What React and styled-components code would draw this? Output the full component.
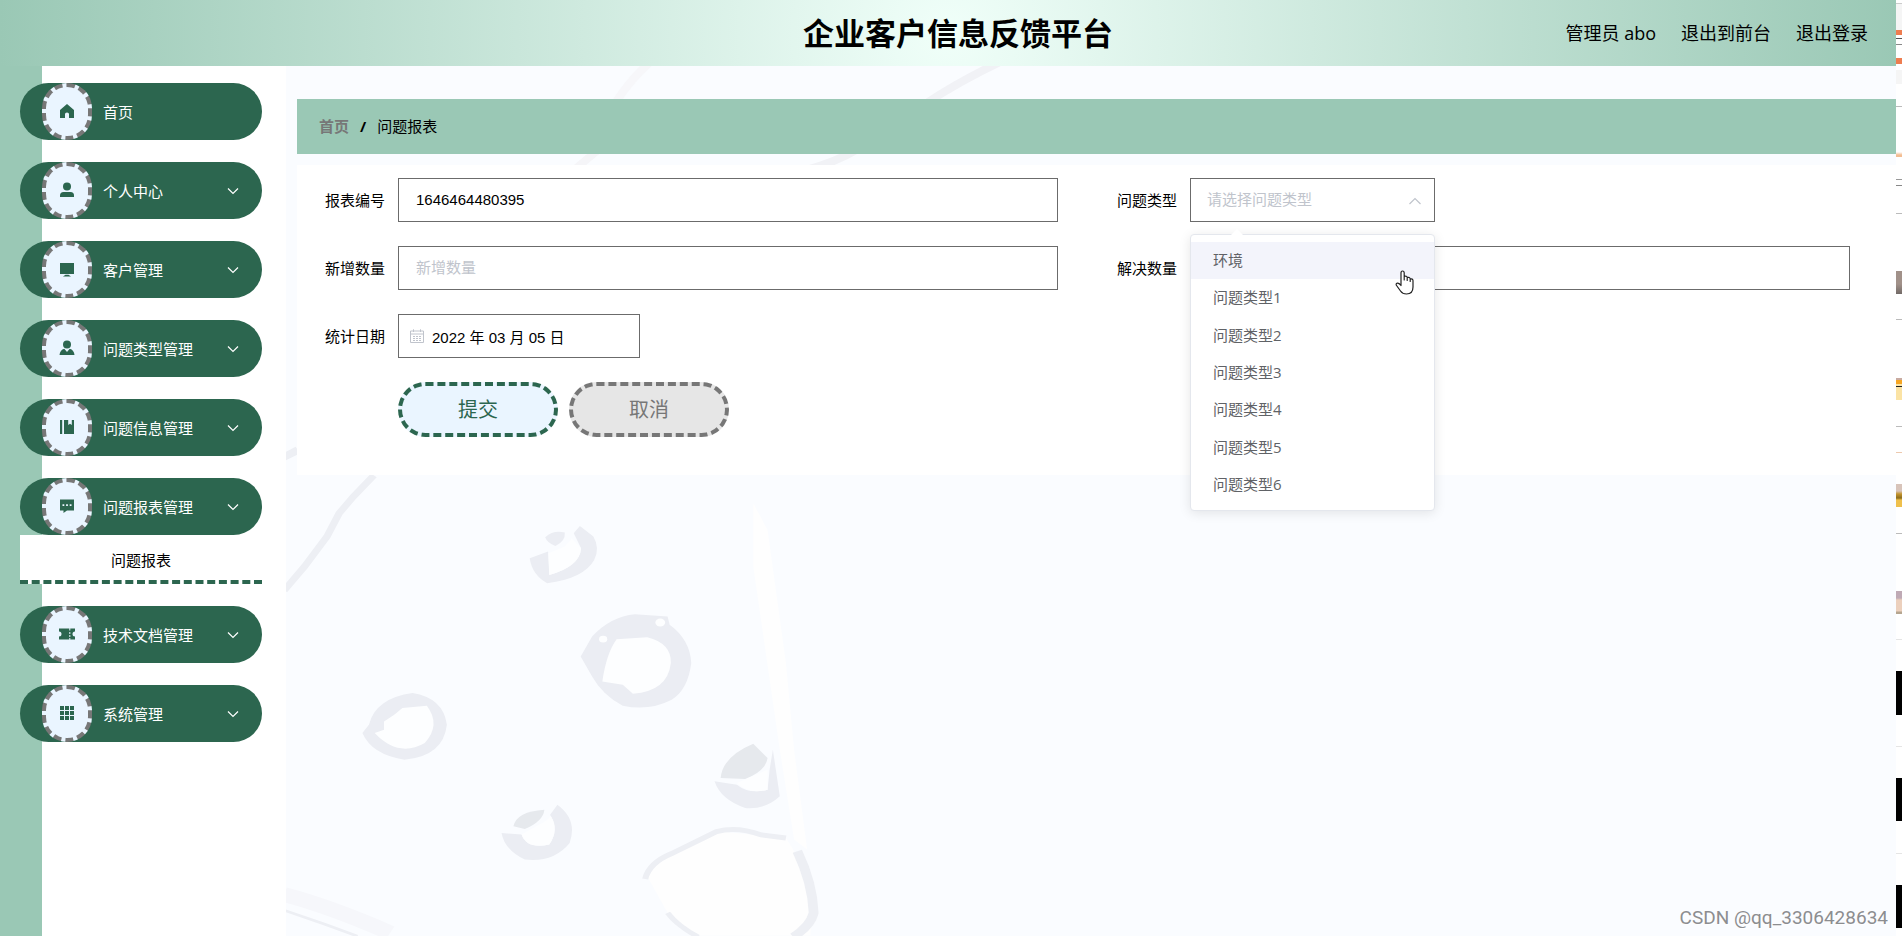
import React from "react";
import styled, { createGlobalStyle, css } from "styled-components";

const GlobalStyle = createGlobalStyle`
  * {
    box-sizing: border-box;
  }
  body {
    margin: 0;
    background: #fff;
    color: #000;
    font-family: "Open Sans", "Noto Sans CJK SC", sans-serif;
    font-size: 15px;
  }
  ul {
    list-style: none;
    margin: 0;
    padding: 0;
  }
  a {
    color: inherit;
    text-decoration: none;
  }
`;

const icons = {
  home: <path d="M8 1 L15 7 V15 H10 V11 Q10 9.500 8 9.500 Q6 9.500 6 11 V15 H1 V7 Z" />,
  user: (
    <>
      <circle cx="8" cy="4.500" r="4" />
      <path d="M1 15 V13.500 Q1 10 4.500 10 H11.500 Q15 10 15 13.500 V15 Z" />
    </>
  ),
  platform: <path d="M1 2 H15 V13 H1 Z M6.500 13.800 H9.500 L12 15.500 H4 Z" />,
  custom: (
    <>
      <circle cx="8" cy="4.500" r="4" />
      <path d="M.5 15 Q1 10 5.300 8.800 L8 12 L10.700 8.800 Q15 10 15.500 15 Z" />
    </>
  ),
  management: <path d="M1 1 H3.200 V15 H1 Z M5 1 H9.200 V6 L11 4.800 L12.800 6 V1 H15 V15 H5 Z" />,
  comment: (
    <path
      fillRule="evenodd"
      d="M1 1.500 H15 V12.500 H8 L4.500 15 V12.500 H1 Z M3.500 6.200 V8 H5.300 V6.200 Z M7.100 6.200 V8 H8.900 V6.200 Z M10.700 6.200 V8 H12.500 V6.200 Z"
    />
  ),
  ticket: (
    <path
      fillRule="evenodd"
      d="M0 2.500 H16 V5.500 A2.400 2.400 0 0 0 16 10.500 V13.500 H0 V10.500 A2.400 2.400 0 0 0 0 5.500 Z M10.300 2.500 V4.500 H11.300 V2.500 Z M10.300 6 V8 H11.300 V6 Z M10.300 9 V11 H11.300 V9 Z M10.300 12 V13.500 H11.300 V12 Z"
    />
  ),
  menu: (
    <path d="M1 1 H5 V5 H1 Z M6 1 H10 V5 H6 Z M11 1 H15 V5 H11 Z M1 6 H5 V10 H1 Z M6 6 H10 V10 H6 Z M11 6 H15 V10 H11 Z M1 11 H5 V15 H1 Z M6 11 H10 V15 H6 Z M11 11 H15 V15 H11 Z" />
  ),
};

const menus = [
  { name: "首页", icon: "home" },
  { name: "个人中心", icon: "user", more: true },
  { name: "客户管理", icon: "platform", more: true },
  { name: "问题类型管理", icon: "custom", more: true },
  { name: "问题信息管理", icon: "management", more: true },
  { name: "问题报表管理", icon: "comment", more: true, child: "问题报表" },
  { name: "技术文档管理", icon: "ticket", more: true },
  { name: "系统管理", icon: "menu", more: true },
];

const types = ["环境", "问题类型1", "问题类型2", "问题类型3", "问题类型4", "问题类型5", "问题类型6"];

const Chevron = ({ up }) => (
  <svg width="14" height="14" viewBox="0 0 14 14" fill="none" stroke="currentColor" strokeWidth="1.2">
    <path d={up ? "M1.500 10 L7 4.500 L12.500 10" : "M2 4.500 L7 9.500 L12 4.500"} />
  </svg>
);

// 背景插画
const Backdrop = () => (
  <BackdropSvg viewBox="0 0 1610 870" preserveAspectRatio="xMinYMin slice" aria-hidden="true">
    <g fill="none" stroke="#f1f2f6" strokeWidth="8">
      <path d="M714 -4 Q676 14 642 36" />
      <path d="M570 84 Q550 96 520 104" />
      <path stroke="#f7f7fa" d="M364 -4 Q344 14 330 36" />
      <path stroke="#f5f5f8" d="M312 84 L288 104" />
    </g>
    <g transform="translate(-6 384) scale(.408 .333)">
      <g fill="#fefefe">
        <path d="M1160 160 L1195 240 L1240 640 L1260 900 L1292 1200 L1260 1170 L1225 900 L1160 350 Z" />
        <path d="M900 1280 Q910 1235 965 1210 L1070 1145 L1240 1165 Q1310 1290 1300 1458 H1020 L950 1390 Z" />
      </g>
      <g fill="none" stroke="#edeff4">
        <path strokeWidth="18" d="M10 422 L60 350 L115 260 L145 190 L180 140 L230 76" />
        <path strokeWidth="22" d="M8 22 L44 0" />
        <path strokeWidth="44" stroke="#f6f7fb" d="M10 1335 Q120 1370 270 1450" />
        <path strokeWidth="8" d="M10 1382 L110 1424 L190 1460" />
        <path strokeWidth="15" d="M895 1288 Q905 1240 960 1212 L1070 1146 Q1120 1130 1180 1156 L1240 1165" />
        <path strokeWidth="24" d="M1268 1205 Q1305 1300 1308 1390 Q1300 1430 1258 1462" />
        <path strokeWidth="14" d="M950 1390 Q975 1430 1025 1462" />
      </g>
      <g fill="#ebedf3" fillRule="evenodd">
        <path d="M735 228 L768 260 Q785 295 770 330 Q745 385 655 400 Q618 375 612 325 L657 305 L660 375 Q735 350 738 295 L720 250 Z" />
        <path d="M650 262 Q670 240 698 248 Q700 275 675 288 Q655 280 650 262 Z" />
        <path d="M737 620 L765 560 Q810 500 870 493 L950 500 L955 525 Q1005 570 1008 640 Q1000 720 960 750 Q905 785 840 768 Q790 735 765 680 Z" />
        <path d="M202 850 L218 825 Q235 745 325 730 Q400 745 409 825 Q400 920 305 930 Q225 915 202 850 Z" />
        <path d="M1065 995 L1120 1005 Q1150 1035 1195 1020 L1200 960 L1208 900 L1225 1040 Q1190 1080 1140 1075 Q1080 1050 1065 995 Z" />
        <path d="M543 1150 L592 1155 Q605 1200 660 1185 Q685 1140 662 1095 L680 1065 Q730 1110 710 1180 Q670 1240 600 1230 Q550 1200 543 1150 Z" />
      </g>
      <g fill="#e6e9ed">
        <path d="M1080 985 Q1085 920 1160 882 L1195 925 Q1190 965 1140 988 Z" />
        <path d="M572 1130 Q580 1085 648 1080 Q645 1115 600 1138 Z" />
      </g>
      <g fill="#fdfeff">
        <path d="M658 310 L698 290 L715 265 L738 295 Q735 350 660 375 Z" />
        <path d="M825 568 Q800 610 790 695 L840 705 L865 732 Q950 725 958 640 Q960 580 900 562 Z" />
        <path d="M232 850 L255 840 V815 L280 795 L300 775 L360 768 Q395 825 355 880 Q290 925 232 850 Z" />
        <path d="M1120 1000 L1195 960 V1020 Q1150 1035 1120 1000 Z" />
        <path d="M592 1155 L650 1115 L664 1100 Q685 1140 660 1185 Q605 1200 592 1155 Z" />
        <circle cx="792" cy="568" r="10" />
        <circle cx="932" cy="518" r="12" />
      </g>
    </g>
  </BackdropSvg>
);

const App = () => {
  const [type, setType] = React.useState("");
  const [report, setReport] = React.useState("1646464480395");
  const [date, setDate] = React.useState("2022 年 03 月 05 日");

  return (
    <Screen>
      <GlobalStyle />
      <Page>
        <Header>
          <Title>企业客户信息反馈平台</Title>
          <UserNav>
            <span>管理员 abo</span>
            <a href="#front">退出到前台</a>
            <a href="#logout">退出登录</a>
          </UserNav>
        </Header>

        <Body>
          <Sidebar>
            <Menu>
              {menus.map((m) => (
                <li key={m.name}>
                  <MenuButton type="button">
                    <IconRing>
                      <svg width="16" height="16" viewBox="0 0 16 16" fill="currentColor">
                        {icons[m.icon]}
                      </svg>
                    </IconRing>
                    <MenuName>{m.name}</MenuName>
                    {m.more && <Chevron />}
                  </MenuButton>
                  {m.child && <SubMenu href="#report">{m.child}</SubMenu>}
                </li>
              ))}
            </Menu>
          </Sidebar>

          <Main>
            <Backdrop />
            <Breadcrumb>
              <a href="#home">首页</a>
              <b>/</b>
              <span>问题报表</span>
            </Breadcrumb>

            <Form onSubmit={(e) => e.preventDefault()}>
              <Field>
                <Label htmlFor="report">报表编号</Label>
                <Input id="report" value={report} onChange={(e) => setReport(e.target.value)} />
              </Field>
              <Field>
                <Label htmlFor="type">问题类型</Label>
                <SelectBox>
                  <Select id="type" value={type} onChange={(e) => setType(e.target.value)}>
                    <option value="">请选择问题类型</option>
                    {types.map((t) => (
                      <option key={t}>{t}</option>
                    ))}
                  </Select>
                  <SelectArrow>
                    <Chevron up />
                  </SelectArrow>
                  <Dropdown>
                    {types.map((t, i) => (
                      <Option key={t} $hover={i === 0} onClick={() => setType(t)}>
                        {t}
                      </Option>
                    ))}
                    <Pointer width="20" height="26" viewBox="0 0 20 26">
                      <path
                        fill="#fff"
                        stroke="#222"
                        strokeWidth="1.200"
                        strokeLinejoin="round"
                        d="M6 15 V3 Q6 1 7.500 1 Q9.200 1 9.200 3 V10 V6.500 Q11.800 5.500 12.200 7.500 V10.500 V7.500 Q14.800 6.800 15.200 8.800 V11.500 V9 Q17.800 8.500 18 10.500 V17 Q18 24 11.500 24 Q7.500 24 5.500 21 L1.200 15 Q.8 13 2.800 13.200 Q4.500 13.500 6 15.500 Z"
                      />
                    </Pointer>
                  </Dropdown>
                </SelectBox>
              </Field>
              <Field>
                <Label htmlFor="added">新增数量</Label>
                <Input id="added" placeholder="新增数量" />
              </Field>
              <Field>
                <Label htmlFor="solved">解决数量</Label>
                <Input id="solved" placeholder="解决数量" />
              </Field>
              <Field $wide>
                <Label htmlFor="date">统计日期</Label>
                <DateBox>
                  <svg width="14" height="14" viewBox="0 0 14 14" fill="none" stroke="#c0c4cc">
                    <path d="M.5 2 H13.500 V13.500 H.5 Z M.5 5 H13.500 M3.500 .3 V3 M10.500 .3 V3" />
                    <path strokeDasharray="2 1" d="M3 7.500 H11 M3 9.500 H11 M3 11.500 H11" />
                  </svg>
                  <DateInput id="date" value={date} onChange={(e) => setDate(e.target.value)} />
                </DateBox>
              </Field>
              <Actions>
                <Button type="submit">提交</Button>
                <Button type="button" $cancel>
                  取消
                </Button>
              </Actions>
            </Form>
          </Main>
        </Body>
        <Watermark>CSDN @qq_3306428634</Watermark>
      </Page>
      <Edge />
    </Screen>
  );
};

const Screen = styled.div`
  display: flex;
  min-height: 100vh;
`;

const Page = styled.div`
  position: relative;
  display: flex;
  flex: 1;
  flex-direction: column;
  min-width: 0;
`;

// 窗口右侧露出的一条
const Edge = styled.div`
  width: 6px;
  background: linear-gradient(
    #fff 3px, #ccc 3px 4px, #f5f5f5 4px 30px, #ee7d50 30px 35px, #fff 35px 38px, #555 38px 39px,
    #fff 39px 44px, #888 44px 45px, #fff 45px 58px, #ee7d50 58px 64px, #fff 64px 70px,
    #f5f5f5 70px 84px, #fff 84px 106px, #bbb 106px 107px, #fff 107px 152px, #f3bd92 155px 157px,
    #fff 157px 179px, #999 179px 180px, #fff 180px 185px, #888 185px 186px,
    #fff 186px 213px, #bbb 213px 214px, #fff 214px 271px, #a19189 271px 284px, #726a67 294px,
    #fff 294px 319px, #bbb 319px 320px, #fff 320px 378px, #c9aba0 378px 380px, #f6a623 380px 384px,
    #fbe3a4 384px 386px, #222 386px 387px, #fbe3a4 387px 400px, #fff 400px 426px, #bbb 426px 427px,
    #fff 427px 452px, #edc9ae 452px 453px, #fff 453px 484px, #d8c4ba 484px 491px, #c4942e 494px,
    #8c6d1d 498px, #efc04c 500px 507px, #fff 507px 533px, #bbb 533px 534px, #fff 534px 591px,
    #bfaab5 591px 598px, #ecd0bd 600px 611px, #b5a58f 612px 614px, #fff 614px 639px,
    #e5e5e5 639px 640px, #fff 640px 671px, #000 671px 715px, #fff 715px 746px, #e5e5e5 746px 747px,
    #fff 747px 778px, #000 778px 821px, #fff 821px 853px, #e5e5e5 853px 854px, #fff 854px 885px,
    #000 885px 928px, #fff 928px
  );
`;

const Header = styled.header`
  display: grid;
  grid-template-columns: 1fr auto 1fr;
  align-items: center;
  height: 66px;
  padding: 0 28px 0 48px;
  background: radial-gradient(circle, #f0fff9, #9ac8b5);
`;

const Title = styled.h1`
  grid-column: 2;
  margin: 0;
  font-size: 31px;
  line-height: 40px;
  font-weight: 700;
`;

const UserNav = styled.nav`
  display: flex;
  justify-content: flex-end;
  gap: 25px;
  font-size: 18px;
  line-height: 24px;
  white-space: nowrap;
`;

const Body = styled.div`
  display: flex;
  flex: 1;
`;

const Sidebar = styled.aside`
  width: 286px;
  padding: 17px 24px 17px 20px;
  background: linear-gradient(to right, #9ac8b5 42px, #fff 42px);
`;

const Menu = styled.ul`
  display: flex;
  flex-direction: column;
  gap: 22px;
`;

const MenuButton = styled.button`
  display: flex;
  align-items: center;
  width: 100%;
  height: 57px;
  padding: 0 22px;
  border: 0;
  border-radius: 30px;
  background: #2c664f;
  color: #fff;
  font: inherit;
  text-align: left;
`;

const IconRing = styled.span`
  display: flex;
  align-items: center;
  justify-content: center;
  width: 50px;
  height: 57px;
  padding-bottom: 2px;
  border: 4px dashed #777;
  border-radius: 25px;
  background: #eaf5ff;
  color: #2c664f;
`;

const MenuName = styled.span`
  flex: 1;
  padding-left: 11px;
`;

const SubMenu = styled.a`
  display: block;
  height: 49px;
  border-bottom: 4px dashed #2c664f;
  background: #fff;
  line-height: 50px;
  text-align: center;
`;

const Main = styled.main`
  position: relative;
  flex: 1;
  min-width: 0;
  padding: 33px 0 0 11px;
  background: #fafcff;
  overflow: hidden;
`;

const BackdropSvg = styled.svg`
  position: absolute;
  inset: 0;
  width: 100%;
  height: 100%;
`;

const Breadcrumb = styled.nav`
  position: relative;
  display: flex;
  align-items: center;
  gap: 11px;
  height: 55px;
  padding: 0 22px 2px;
  background: #9ac8b5;

  a {
    color: #777;
    font-weight: 700;
  }
`;

const Form = styled.form`
  position: relative;
  display: grid;
  grid-template-columns: 1fr 1fr;
  gap: 24px 44px;
  margin-top: 11px;
  padding: 13px 46px 38px 13px;
  background: #fff;
`;

const Field = styled.div`
  display: flex;
  align-items: center;
  ${({ $wide }) => $wide && css`
    grid-column: 1 / -1;
  `}
`;

const Label = styled.label`
  width: 88px;
  padding: 0 13px 2px 0;
  text-align: right;
`;

const control = css`
  height: 44px;
  border: 1px solid #6b6b6b;
  border-radius: 0;
  background: #fff;
  color: #000;
  font-family: "Liberation Sans", "Noto Sans CJK SC", sans-serif;
  font-size: 15px;
  outline: none;
`;

const Input = styled.input`
  ${control}
  flex: 1;
  min-width: 0;
  padding: 0 17px 2px;

  &::placeholder {
    color: #c0c4cc;
  }
`;

const SelectBox = styled.div`
  position: relative;
  width: 245px;
`;

const Select = styled.select`
  ${control}
  display: block;
  width: 100%;
  padding: 0 36px 2px 16px;
  appearance: none;
  color: ${({ value }) => (value ? "#000" : "#c0c4cc")};
`;

const SelectArrow = styled.span`
  position: absolute;
  top: 14px;
  right: 13px;
  height: 14px;
  color: #c0c4cc;
  pointer-events: none;
`;

const Dropdown = styled.ul`
  position: absolute;
  z-index: 2;
  top: 56px;
  left: 0;
  right: 0;
  display: grid;
  grid-auto-rows: 1fr;
  height: 277px;
  padding: 7px 0;
  border: 1px solid #e4e7ed;
  border-radius: 4px;
  background: #fff;
  box-shadow: 0 2px 12px rgba(0, 0, 0, 0.1);
  color: #606266;

  &::before {
    content: "";
    position: absolute;
    top: -6px;
    left: 40px;
    border: 6px solid transparent;
    border-top: 0;
    border-bottom-color: #fff;
  }
`;

const Option = styled.li`
  display: flex;
  align-items: center;
  padding: 0 22px 2px;
  background: ${({ $hover }) => ($hover ? "#f3f4fb" : "transparent")};
`;

const Pointer = styled.svg`
  position: absolute;
  top: 35px;
  right: 19px;
`;

const DateBox = styled.div`
  ${control}
  display: flex;
  align-items: center;
  gap: 8px;
  width: 242px;
  padding: 0 11px;
`;

const DateInput = styled.input`
  flex: 1;
  min-width: 0;
  padding: 0;
  border: 0;
  background: none;
  font: inherit;
  outline: none;
`;

const Actions = styled.div`
  grid-column: 1 / -1;
  display: flex;
  gap: 11px;
  padding-left: 88px;
`;

const Button = styled.button`
  width: 160px;
  height: 55px;
  padding: 0 0 2px;
  border: 4px dashed ${({ $cancel }) => ($cancel ? "#777" : "#2c664f")};
  border-radius: 30px;
  background: ${({ $cancel }) => ($cancel ? "#e6e6e6" : "#eaf5ff")};
  color: ${({ $cancel }) => ($cancel ? "#777" : "#2c664f")};
  font-family: inherit;
  font-size: 20px;
`;

const Watermark = styled.div`
  position: absolute;
  right: 8px;
  bottom: 6px;
  color: #8c8d90;
  font-family: Roboto, sans-serif;
  font-size: 19px;
  line-height: 24px;
  text-shadow: 1px 1px 0 #fff;
`;

export default App;
